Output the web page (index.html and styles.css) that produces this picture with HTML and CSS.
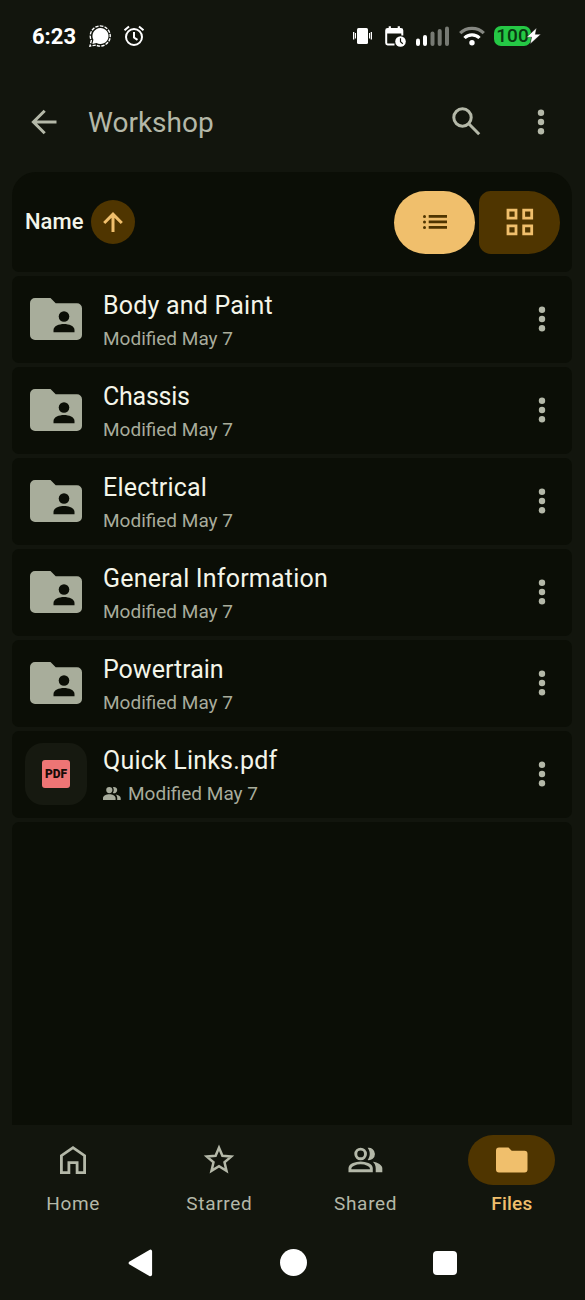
FILE: index.html
```html
<!DOCTYPE html>
<html lang="en">
<head>
<meta charset="utf-8">
<title>Workshop</title>
<link rel="stylesheet" href="styles.css">
</head>
<body>
<svg class="defs" width="0" height="0" aria-hidden="true">
  <symbol id="more" viewBox="0 0 8 26"><circle cx="4" cy="3.700" r="3.200"/><circle cx="4" cy="13" r="3.200"/><circle cx="4" cy="22.300" r="3.200"/></symbol>
  <symbol id="folder" viewBox="0 0 52 42">
    <path d="M5 0H20.500L25.700 5.200H47a5 5 0 0 1 5 5V37a5 5 0 0 1-5 5H5a5 5 0 0 1-5-5V5a5 5 0 0 1 5-5Z"/>
    <g fill="#0b0e06"><circle cx="34" cy="18.500" r="5.300"/><path d="M23.500 34.200V32c0-4 5.500-6 10.500-6s10.500 2 10.500 6v2.200Z"/></g>
  </symbol>
</svg>
<div class="screen">
  <header class="status">
    <span class="time">6:23</span>
    <svg class="chat" width="22" height="22" viewBox="0 0 24 24"><path d="M12.200 3.300a8.700 8.700 0 1 1-4 16.200L3.700 20.600l1.100-4.400A8.700 8.700 0 0 1 12.200 3.300Z" fill="#fff"/><path d="M12.200 1a11 11 0 1 1-4.800 20.900L1 23.100l1.500-6.200A11 11 0 0 1 12.200 1Z" fill="none" stroke="#fff" stroke-width="1.500" stroke-dasharray="3.600 1.300"/></svg>
    <svg class="alarm" width="22" height="22" viewBox="0 0 22 22" fill="none" stroke="#fff" stroke-width="2"><circle cx="11" cy="12" r="8"/><path d="M11 7v5.500l3.500 2.300M1.500 5.300 6 1.500M20.500 5.300 16 1.500"/></svg>
    <span class="grow"></span>
    <svg class="vibrate" width="19" height="18" viewBox="0 0 19 18" fill="#fff"><rect x="4" y="1" width="11" height="16" rx="1.500"/><rect x="0" y="5" width="1.300" height="7.500"/><rect x="2" y="6" width="1" height="5.500"/><rect x="16" y="6" width="1" height="5.500"/><rect x="17.700" y="5" width="1.300" height="7.500"/></svg>
    <svg class="cal" width="21" height="21" viewBox="0 0 21 21"><path d="M9.500 18.500H2.600a1.400 1.400 0 0 1-1.400-1.400V4.500a1.400 1.400 0 0 1 1.400-1.400h13.300a1.400 1.400 0 0 1 1.400 1.400v5" fill="none" stroke="#fff" stroke-width="2"/><path d="M1 3h16.500v4.500H1ZM3.700.3h2.200v3H3.700ZM12.700.3h2.200v3h-2.200Z" fill="#fff"/><circle cx="15.500" cy="15.500" r="5.300" fill="#fff"/><path d="M15.500 12.300v3.500l2.300 2" fill="none" stroke="#12150d" stroke-width="1.200"/></svg>
    <svg class="signal" width="34" height="20" viewBox="0 0 34 20"><g fill="#fff"><rect x="0" y="12.500" width="4" height="7.500" rx="2"/><rect x="7" y="9" width="4" height="11" rx="2"/></g><g fill="#777a73"><rect x="14.500" y="5.500" width="4" height="14.500" rx="2"/><rect x="21.700" y="3" width="4" height="17" rx="2"/><rect x="29" y="0.500" width="4" height="19.500" rx="2"/></g></svg>
    <svg class="wifi" width="26" height="20" viewBox="0 0 26 20" fill="none" stroke-width="3.200"><path d="M1.200 7.200C7.500.8 18.500.8 24.800 7.200" stroke="#858781"/><path d="M5.500 12c4-4.200 11-4.200 15 0" stroke="#fff"/><circle cx="13" cy="16.800" r="2.700" fill="#fff"/></svg>
    <span class="battery"><span class="level">100</span><svg class="bolt" width="15" height="16" viewBox="0 0 15 16"><path d="M10.500 0 .5 9.200H5.600L4.200 16 14.800 6.300H9.300Z" fill="#fff" stroke="#12150d" stroke-width=".4"/></svg></span>
  </header>

  <div class="appbar">
    <svg class="back" width="26" height="26" viewBox="0 0 26 26" fill="none" stroke="#b4b8a8" stroke-width="3"><path d="M25.500 13H2.500M13.700 1.700 2.400 13l11.300 11.300"/></svg>
    <h1 class="title">Workshop</h1>
    <svg class="search" width="29" height="29" viewBox="0 0 29 29" fill="none" stroke="#b4b8a8" stroke-width="3"><circle cx="10.500" cy="10.500" r="8.700"/><path d="m16.800 16.800 10.400 10.400"/></svg>
    <svg class="more" width="8" height="26"><use href="#more"/></svg>
  </div>

  <main class="list">
    <div class="sort">
      <span class="name">Name</span>
      <span class="direction"><svg width="20" height="20" viewBox="0 0 20 20" fill="none" stroke="#f0bf6c" stroke-width="3"><path d="M10 20V2.500M1.200 11 10 2.200 18.800 11"/></svg></span>
      <span class="grow"></span>
      <span class="view selected"><svg width="24" height="14" viewBox="0 0 24 14" fill="#4f3500"><path d="M5.700.1H24v2.700H5.700ZM5.700 5.600H24v2.700H5.700ZM5.700 11.100H24v2.700H5.700Z"/><circle cx="1.500" cy="1.500" r="1.500"/><circle cx="1.500" cy="7" r="1.500"/><circle cx="1.500" cy="12.400" r="1.500"/></svg></span>
      <span class="view grid"><svg width="28" height="28" viewBox="0 0 28 28" fill="none" stroke="#f0bf6c" stroke-width="2.800"><path d="M2 2.200h8v8h-8ZM17.700 2.200h8v8h-8ZM2 17.800h8v8h-8ZM17.700 17.800h8v8h-8Z"/></svg></span>
    </div>
    <div class="row"><svg class="folder" width="52" height="42"><use href="#folder"/></svg><div class="copy"><div class="file wide">Body and Paint</div><div class="meta"><span>Modified May 7</span></div></div><svg class="more" width="8" height="26"><use href="#more"/></svg></div>
    <div class="row"><svg class="folder" width="52" height="42"><use href="#folder"/></svg><div class="copy"><div class="file narrow">Chassis</div><div class="meta"><span>Modified May 7</span></div></div><svg class="more" width="8" height="26"><use href="#more"/></svg></div>
    <div class="row"><svg class="folder" width="52" height="42"><use href="#folder"/></svg><div class="copy"><div class="file wide">Electrical</div><div class="meta"><span>Modified May 7</span></div></div><svg class="more" width="8" height="26"><use href="#more"/></svg></div>
    <div class="row"><svg class="folder" width="52" height="42"><use href="#folder"/></svg><div class="copy"><div class="file wide">General Information</div><div class="meta"><span>Modified May 7</span></div></div><svg class="more" width="8" height="26"><use href="#more"/></svg></div>
    <div class="row"><svg class="folder" width="52" height="42"><use href="#folder"/></svg><div class="copy"><div class="file">Powertrain</div><div class="meta"><span>Modified May 7</span></div></div><svg class="more" width="8" height="26"><use href="#more"/></svg></div>
    <div class="row"><span class="thumb"><span class="pdf">PDF</span></span><div class="copy"><div class="file wide">Quick Links.pdf</div><div class="meta"><svg class="people" width="18" height="13" viewBox="0 0 18 13" fill="#a8ac9c"><circle cx="6.300" cy="3.100" r="3.100"/><path d="M0 13v-2c0-2.500 3.500-3.800 6.300-3.800s6.300 1.300 6.300 3.800v2ZM9.800.3a3.100 3.100 0 1 1 0 5.600c1.300-1.600 1.300-4 0-5.600ZM12.700 7.500c2.500.4 5 1.500 5 3.500v2h-3.500v-2c0-1.500-.6-2.700-1.500-3.500Z"/></svg><span>Modified May 7</span></div></div><svg class="more" width="8" height="26"><use href="#more"/></svg></div>
    <div class="rest"></div>
  </main>

  <nav class="tabs">
    <div class="tab"><span class="pill"><svg width="26" height="28" viewBox="0 0 26 28" fill="none" stroke="#b4b8a8" stroke-width="2.800"><path d="M1.400 26.600V9.700L13 1.700l11.600 8v16.900h-7.500v-9.900H8.900v9.900Z"/></svg></span><span class="label">Home</span></div>
    <div class="tab"><span class="pill"><svg width="30" height="30" viewBox="0 0 30 30" fill="none" stroke="#b4b8a8" stroke-width="2.500"><path d="m15 2.700 3.400 8.100 8.800.8-6.700 5.700 2 8.600-7.500-4.600-7.500 4.600 2-8.600-6.700-5.700 8.800-.8Z"/></svg></span><span class="label">Starred</span></div>
    <div class="tab"><span class="pill"><svg width="35" height="26" viewBox="0 0 36 26"><g fill="none" stroke="#b4b8a8" stroke-width="3"><circle cx="13" cy="6.800" r="5"/><path d="M2 24v-2.500c0-3.300 6-5.500 11-5.500s11 2.200 11 5.500V24Z"/></g><path d="M20.200.5a6.400 6.400 0 1 1 0 12.600c2.900-3.700 2.900-8.900 0-12.600ZM25.500 14.700c5 .8 9.800 3.100 9.800 6.800v4h-6.800v-4c0-3.100-1.200-5.300-3-6.800Z" fill="#b4b8a8"/></svg></span><span class="label">Shared</span></div>
    <div class="tab active"><span class="pill"><svg width="32" height="26" viewBox="0 0 32 26"><path d="M3 .5h9.500l3.200 3.200H28.500a3 3 0 0 1 3 3V22.500a3 3 0 0 1-3 3H3a3 3 0 0 1-3-3V3.500a3 3 0 0 1 3-3Z" fill="#f0bf6c"/></svg></span><span class="label">Files</span></div>
  </nav>
  <div class="system">
    <svg width="26" height="28" viewBox="0 0 26 28"><path d="M2.500 14 22.300 2.500v23Z" fill="#fff" stroke="#fff" stroke-width="3.600" stroke-linejoin="round"/></svg>
    <span class="circle"></span>
    <span class="square"></span>
  </div>
</div>
</body>
</html>
```
FILE: styles.css
```css
* { box-sizing: border-box; }
body { margin: 0; background: #12150d; font-family: Roboto, "Liberation Sans", sans-serif; color: #f4f5e9; }
svg { display: block; flex: none; overflow: visible; }
.defs { position: absolute; }
.grow { flex: 1; }
.screen { width: 585px; height: 1300px; overflow: hidden; display: flex; flex-direction: column; }

.status { height: 72px; display: flex; align-items: center; padding: 0 44px 0 32px; color: #fff; }
.time { width: 57px; font-size: 22px; font-weight: 700; white-space: nowrap; }
.alarm { margin-left: 12px; }
.vibrate { margin-right: 13px; }
.cal { margin-right: 10px; }
.signal { margin-right: 9px; }
.wifi { margin-right: 9px; }
.battery { position: relative; width: 47px; height: 20px; }
.level { display: block; width: 37px; height: 20px; border-radius: 7px; background: #25c845; color: #0a3810; font-size: 19px; line-height: 20px; font-weight: 500; text-align: center; }
.bolt { position: absolute; right: 0; top: 2px; }

.appbar { height: 100px; display: flex; align-items: center; padding: 0 40px 1px 31px; }
.title { flex: 1; margin: 0 0 0 31px; padding-top: 2px; font-size: 28px; font-weight: 400; color: #b4b8a8; line-height: 36px; }
.search { margin-right: 56px; }
.more { fill: #b4b8a8; }

.list { width: 560px; height: 953px; margin-left: 12px; display: flex; flex-direction: column; gap: 4px; }
.sort { height: 100px; flex: none; display: flex; align-items: center; background: #0b0e06; border-radius: 24px 24px 7px 7px; padding: 0 12px 0 13px; }
.name { width: 66px; padding-bottom: 1px; font-size: 22px; font-weight: 500; }
.direction { width: 44px; height: 44px; border-radius: 50%; background: #4f3500; display: flex; align-items: center; justify-content: center; }
.view { width: 81px; height: 63px; display: flex; align-items: center; justify-content: center; }
.selected { background: #f0bf6c; border-radius: 32px; margin-right: 4px; }
.grid { background: #4f3500; border-radius: 12px 32px 32px 12px; }
.row { height: 87px; flex: none; display: flex; align-items: center; background: #0b0e06; border-radius: 7px; padding: 0 26px 1px 18px; }
.copy { flex: 1; margin-left: 21px; padding-top: 6px; }
.file { font-size: 25px; line-height: 32px; white-space: nowrap; }
.wide { letter-spacing: .2px; }
.narrow { letter-spacing: -.25px; }
.meta { display: flex; align-items: center; gap: 7px; font-size: 19px; line-height: 33px; color: #a8ac9c; white-space: nowrap; }
.thumb { width: 62px; height: 62px; margin: 0 -5px; border-radius: 18px; background: #161910; display: flex; align-items: center; justify-content: center; }
.pdf { width: 28px; height: 28px; border-radius: 3px; background: #ee7575; color: #190b08; font-size: 12px; line-height: 28px; font-weight: 900; text-align: center; }
.folder { fill: #a8ad9b; }
.rest { flex: 1; background: #0b0e06; border-radius: 7px 7px 0 0; }

.tabs { height: 100px; display: flex; padding-top: 10px; }
.tab { flex: 1; display: flex; flex-direction: column; align-items: center; color: #b4b8a8; }
.pill { width: 87px; height: 50px; border-radius: 25px; display: flex; align-items: center; justify-content: center; }
.active .pill { background: #4f3500; }
.active { color: #f0bf6c; }
.label { margin-top: 7px; font-size: 19px; line-height: 24px; font-weight: 400; letter-spacing: .7px; }
.active .label { font-weight: 500; letter-spacing: .2px; }
.system { height: 75px; display: flex; justify-content: space-between; align-items: center; padding: 0 128px 0 128px; }
.circle { width: 27px; height: 27px; border-radius: 50%; background: #fff; }
.square { width: 24px; height: 24px; border-radius: 4px; background: #fff; }
```
